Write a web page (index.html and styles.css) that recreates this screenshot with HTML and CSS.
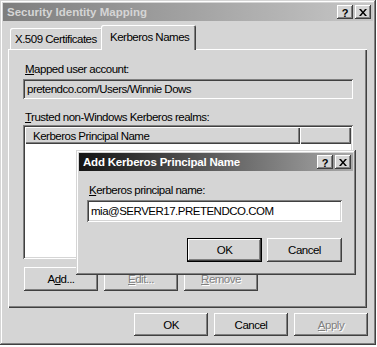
FILE: index.html
```html
<!DOCTYPE html>
<html>
<head>
<meta charset="utf-8">
<link rel="stylesheet" href="styles.css">
</head>
<body>
<div class="window">
  <div class="titlebar inactive">
    <span class="title">Security Identity Mapping</span>
    <div class="tbtns">
      <span class="tbtn q">?</span>
      <span class="tbtn x"><svg width="8" height="7" viewBox="0 0 8 7"><path d="M0 0h2l2 2.5L6 0h2L5 3.5 8 7H6L4 4.5 2 7H0l3-3.5z" fill="#000"/></svg></span>
    </div>
  </div>
  <div class="tabs">
    <div class="tab">X.509 Certificates</div>
    <div class="tab selected">Kerberos Names</div>
  </div>
  <div class="panel">
    <div class="label"><u>M</u>apped user account:</div>
    <div class="field readonly">pretendco.com/Users/Winnie Dows</div>
    <div class="label second"><u>T</u>rusted non-Windows Kerberos realms:</div>
    <div class="list">
      <div class="lhead">
        <div class="col c1">Kerberos Principal Name</div>
        <div class="col c2"></div>
      </div>
    </div>
    <div class="btnrow">
      <div class="btn">A<u>d</u>d...</div>
      <div class="btn disabled"><u>E</u>dit...</div>
      <div class="btn disabled"><u>R</u>emove</div>
    </div>
  </div>
  <div class="footer">
    <div class="btn">OK</div>
    <div class="btn">Cancel</div>
    <div class="btn disabled"><u>A</u>pply</div>
  </div>

  <div class="child">
    <div class="titlebar active">
      <span class="title">Add Kerberos Principal Name</span>
      <div class="tbtns">
        <span class="tbtn q">?</span>
        <span class="tbtn x"><svg width="8" height="7" viewBox="0 0 8 7"><path d="M0 0h2l2 2.5L6 0h2L5 3.5 8 7H6L4 4.5 2 7H0l3-3.5z" fill="#000"/></svg></span>
      </div>
    </div>
    <div class="cbody">
      <div class="label"><u>K</u>erberos principal name:</div>
      <div class="field white">mia@SERVER17.PRETENDCO.COM</div>
      <div class="cbtns">
        <div class="btn default">OK</div>
        <div class="btn">Cancel</div>
      </div>
    </div>
  </div>
</div>
</body>
</html>
```
FILE: styles.css
```css
html, body {
  margin: 0;
  padding: 0;
  background: #ffffff;
}
body {
  font-family: "Liberation Sans", Arial, sans-serif;
  font-size: 11.5px;
  letter-spacing: -0.5px;
  color: #000;
}
.window {
  position: relative;
  width: 376px;
  height: 345px;
  box-sizing: border-box;
  background: #d5d5d5;
  padding: 3px;
  box-shadow: inset -1px -1px #404040, inset 1px 1px #d5d5d5, inset -2px -2px #808080, inset 2px 2px #ffffff;
  display: flex;
  flex-direction: column;
}
.titlebar {
  height: 18px;
  display: flex;
  align-items: center;
  justify-content: space-between;
  padding: 0 2px 0 4px;
  flex: none;
}
.titlebar .title {
  font-weight: bold;
  font-size: 11.5px;
  letter-spacing: 0;
}
.titlebar.inactive {
  background: linear-gradient(to right, #7e7e7e, #c6c6c6);
  color: #d5d5d5;
}
.titlebar.active {
  background: linear-gradient(to right, #141414, #a8a8a8);
  color: #ffffff;
}
.active .title {
  letter-spacing: -0.2px;
}
.tbtns {
  display: flex;
  gap: 2px;
}
.tbtn {
  width: 16px;
  height: 14px;
  box-sizing: border-box;
  background: #d5d5d5;
  box-shadow: inset -1px -1px #404040, inset 1px 1px #ffffff, inset -2px -2px #808080;
  display: flex;
  align-items: center;
  justify-content: center;
  font-weight: bold;
  font-size: 11px;
  color: #000;
  letter-spacing: 0;
}
.tbtn.q {
  padding-top: 1px;
}
.tabs {
  display: flex;
  align-items: flex-end;
  height: 24px;
  margin-top: 4px;
  padding-left: 7px;
  position: relative;
  z-index: 2;
  flex: none;
}
.tab {
  height: 21px;
  box-sizing: border-box;
  padding: 0 6px 0 5px;
  display: flex;
  align-items: center;
  border-radius: 2px 2px 0 0;
  box-shadow: inset 1px 1px #ffffff, inset -1px 0 #404040, inset -2px 0 #808080;
  background: #d5d5d5;
  width: 93px;
}
.tab.selected {
  height: 25px;
  margin-left: -2px;
  margin-bottom: -1px;
  width: 95px;
  padding-left: 9px;
  padding-bottom: 2px;
}
.panel {
  margin: 0 6px 0 5px;
  height: 259px;
  box-sizing: border-box;
  padding: 14px 14px 0 15px;
  box-shadow: inset 1px 1px #ffffff, inset -1px -1px #404040, inset -2px -2px #808080;
  flex: none;
}
.label {
  height: 13px;
  line-height: 13px;
  padding-left: 2px;
}
.label.second {
  margin-top: 12px;
}
.field {
  margin-top: 3px;
  height: 20px;
  box-sizing: border-box;
  padding: 0 4px;
  display: flex;
  align-items: center;
  box-shadow: inset 1px 1px #808080, inset -1px -1px #ffffff, inset 2px 2px #404040, inset -2px -2px #d5d5d5;
}
.field.readonly {
  background: #d5d5d5;
}
.field.white {
  background: #ffffff;
  height: 22px;
}
.list {
  margin-top: 1px;
  height: 134px;
  box-sizing: border-box;
  padding: 2px;
  background: #ffffff;
  box-shadow: inset 1px 1px #808080, inset -1px -1px #ffffff, inset 2px 2px #404040, inset -2px -2px #d5d5d5;
}
.lhead {
  display: flex;
  height: 17px;
}
.col {
  box-sizing: border-box;
  background: #d5d5d5;
  display: flex;
  align-items: center;
  box-shadow: inset 1px 1px #ffffff, inset -1px -1px #404040, inset -2px -2px #808080;
}
.c1 {
  width: 275px;
  padding-left: 8px;
}
.c2 {
  flex: 1;
}
.btnrow {
  display: flex;
  gap: 6px;
  margin-top: 8px;
  padding-left: 1px;
}
.btn {
  width: 74px;
  height: 24px;
  box-sizing: border-box;
  background: #d5d5d5;
  display: flex;
  align-items: center;
  justify-content: center;
  box-shadow: inset -1px -1px #404040, inset 1px 1px #ffffff, inset -2px -2px #808080, inset 2px 2px #d5d5d5;
}
.btn.disabled {
  color: #808080;
  text-shadow: 1px 1px #ffffff;
}
.btn.default {
  border: 1px solid #000;
}
.footer {
  display: flex;
  justify-content: flex-end;
  gap: 6px;
  margin-top: 5px;
  padding-right: 5px;
}
.footer .btn {
  height: 23px;
}
.child {
  position: absolute;
  left: 76px;
  top: 150px;
  width: 280px;
  height: 125px;
  box-sizing: border-box;
  padding: 3px;
  background: #d5d5d5;
  box-shadow: inset -1px -1px #404040, inset 1px 1px #d5d5d5, inset -2px -2px #808080, inset 2px 2px #ffffff;
  z-index: 5;
}
.cbody {
  padding: 13px 11px 0 8px;
}
.cbody .field {
  margin-top: 3px;
}
.cbtns {
  display: flex;
  justify-content: flex-end;
  gap: 5px;
  margin-top: 16px;
}
.cbtns .btn {
  width: 75px;
}
```
